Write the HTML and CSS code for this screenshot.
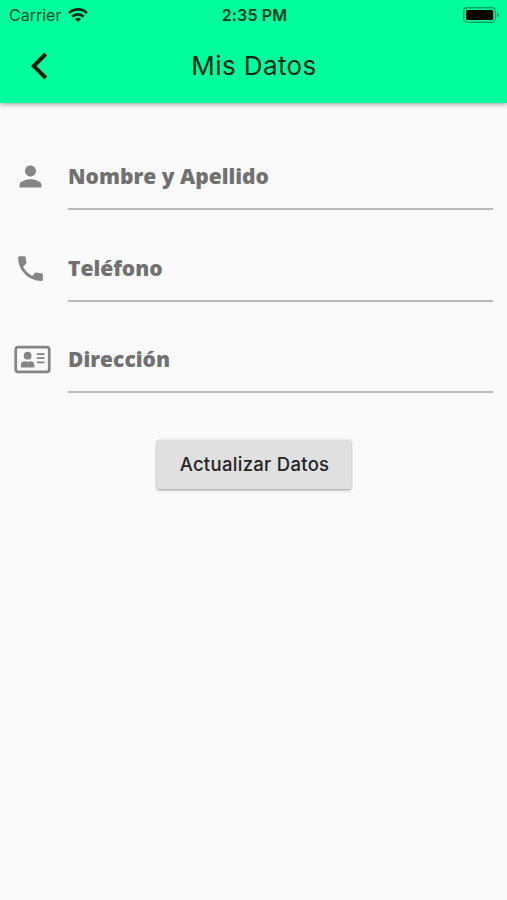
FILE: index.html
```html
<!DOCTYPE html>
<html lang="es">
<head>
<meta charset="utf-8">
<title>Mis Datos</title>
<link rel="stylesheet" href="styles.css">
</head>
<body>
<header class="header">
  <div class="status">
    <div class="network">
      <span class="carrier">Carrier</span>
      <svg class="wifi" viewBox="0 0 20 14" fill="none" stroke="#002b19" stroke-width="2.7"><path d="M1.100 5.100a12.600 12.600 0 0 1 17.800 0M4.200 8.700a8.200 8.200 0 0 1 11.600 0"/><path d="M10 14l-3-3a4.200 4.200 0 0 1 6 0z" fill="#002b19" stroke="none"/></svg>
    </div>
    <span class="time">2:35 PM</span>
    <svg class="battery" viewBox="0 0 37 16"><rect x=".8" y=".8" width="31.600" height="14.400" rx="3.400" fill="none" stroke="#00a565" stroke-width="1.400"/><rect x="3" y="3" width="27.200" height="10" rx="1.200"/><path d="M34 5.400q2.200 1 2.200 2.600T34 10.600z" fill="#00a565"/></svg>
  </div>
  <div class="toolbar">
    <svg class="back" viewBox="0 0 17 28" fill="none" stroke="#001b10" stroke-width="3.9"><path d="M14.800 2L2.800 14l12 12"/></svg>
    <h1 class="title">Mis Datos</h1>
  </div>
</header>
<main class="form">
  <div class="row">
    <div class="icon"><svg width="33" height="33" viewBox="0 0 24 24" fill="#858585"><path d="M12 12c2.21 0 4-1.79 4-4s-1.79-4-4-4-4 1.79-4 4 1.79 4 4 4zm0 2c-2.67 0-8 1.34-8 4v2h16v-2c0-2.66-5.33-4-8-4z"/></svg></div>
    <div class="field"><span class="label name">Nombre y Apellido</span></div>
  </div>
  <div class="row">
    <div class="icon"><svg width="33" height="33" viewBox="0 0 24 24" fill="#858585"><path d="M6.62 10.79c1.44 2.83 3.76 5.14 6.59 6.59l2.2-2.2c.27-.27.67-.36 1.02-.24 1.12.37 2.33.57 3.57.57.55 0 1 .45 1 1V20c0 .55-.45 1-1 1-9.39 0-17-7.61-17-17 0-.55.45-1 1-1h3.5c.55 0 1 .45 1 1 0 1.25.2 2.45.57 3.57.11.35.03.74-.25 1.02l-2.2 2.2z"/></svg></div>
    <div class="field"><span class="label phone">Teléfono</span></div>
  </div>
  <div class="row">
    <div class="icon card"><svg width="37" height="29" viewBox="0 0 38 29" fill="#858585"><rect x="1.800" y="1.800" width="34.400" height="25.400" rx="2.500" fill="none" stroke="#858585" stroke-width="2.800"/><circle cx="14" cy="10.600" r="4"/><path d="M7 22v-1.600c0-2.400 1.800-4 4.200-4 1 0 1.500.5 2.800.5s1.800-.5 2.800-.5c2.400 0 4.200 1.600 4.200 4V22q0 .6-.6.6H7.600Q7 22.600 7 22z"/><path d="M23.400 9h8M23.400 13.200h8M23.400 17.500h8" stroke="#858585" stroke-width="1.800"/></svg></div>
    <div class="field"><span class="label address">Dirección</span></div>
  </div>
  <button class="submit" type="button"><span>Actualizar Datos</span></button>
</main>
</body>
</html>
```
FILE: styles.css
```css
* { box-sizing: border-box; }
body {
  margin: 0;
  min-height: 900px;
  background: #fafafa;
  font-family: Inter, "Liberation Sans", sans-serif;
}
.header {
  height: 103px;
  background: #00ff9c;
  box-shadow: 0 1px 5px rgba(0, 0, 0, .4);
}
.status {
  display: grid;
  grid-template-columns: 1fr auto 1fr;
  align-items: center;
  height: 29px;
  padding: 0 7px 0 9px;
}
.network { display: flex; align-items: center; gap: 7px; }
.carrier { padding-top: 1px; color: #004d2e; font-size: 16px; line-height: 28px; }
.wifi { width: 20px; height: 14px; }
.time { color: #003b23; font-size: 16px; font-weight: 600; letter-spacing: .15px; }
.battery { justify-self: end; width: 37px; height: 16px; }
.toolbar {
  display: grid;
  grid-template-columns: 1fr auto 1fr;
  align-items: center;
  height: 73px;
  padding: 0 30px 0 31px;
}
.back { width: 17px; height: 28px; }
.title {
  margin: 0;
  color: #00291a;
  font-size: 26px;
  font-weight: 400;
  letter-spacing: .4px;
}
.form {
  display: flex;
  flex-direction: column;
  padding: 40px 14px 0;
}
.row { display: flex; height: 67px; margin-bottom: 24.7px; }
.icon { width: 33px; margin-right: 21px; padding-top: 17px; }
.card { padding-top: 19px; }
.icon svg { display: block; }
.field {
  flex: 1;
  padding-top: 18px;
  border-bottom: 2px solid #bababa;
}
.label {
  display: block;
  color: #717171;
  font-family: "Open Sans", sans-serif;
  font-size: 21px;
  font-weight: 800;
  line-height: 30px;
  white-space: nowrap;
}
.submit {
  align-self: center;
  width: 194px;
  height: 49px;
  margin: 22px 0 0 1px;
  padding: 0 0 2px 1px;
  border: 0;
  border-radius: 2px;
  background: #e0e0e0;
  box-shadow: 0 1px 3px rgba(0, 0, 0, .4);
  color: #242424;
  font-family: inherit;
  font-size: 18.5px;
  font-weight: 500;
  letter-spacing: .3px;
}
```
